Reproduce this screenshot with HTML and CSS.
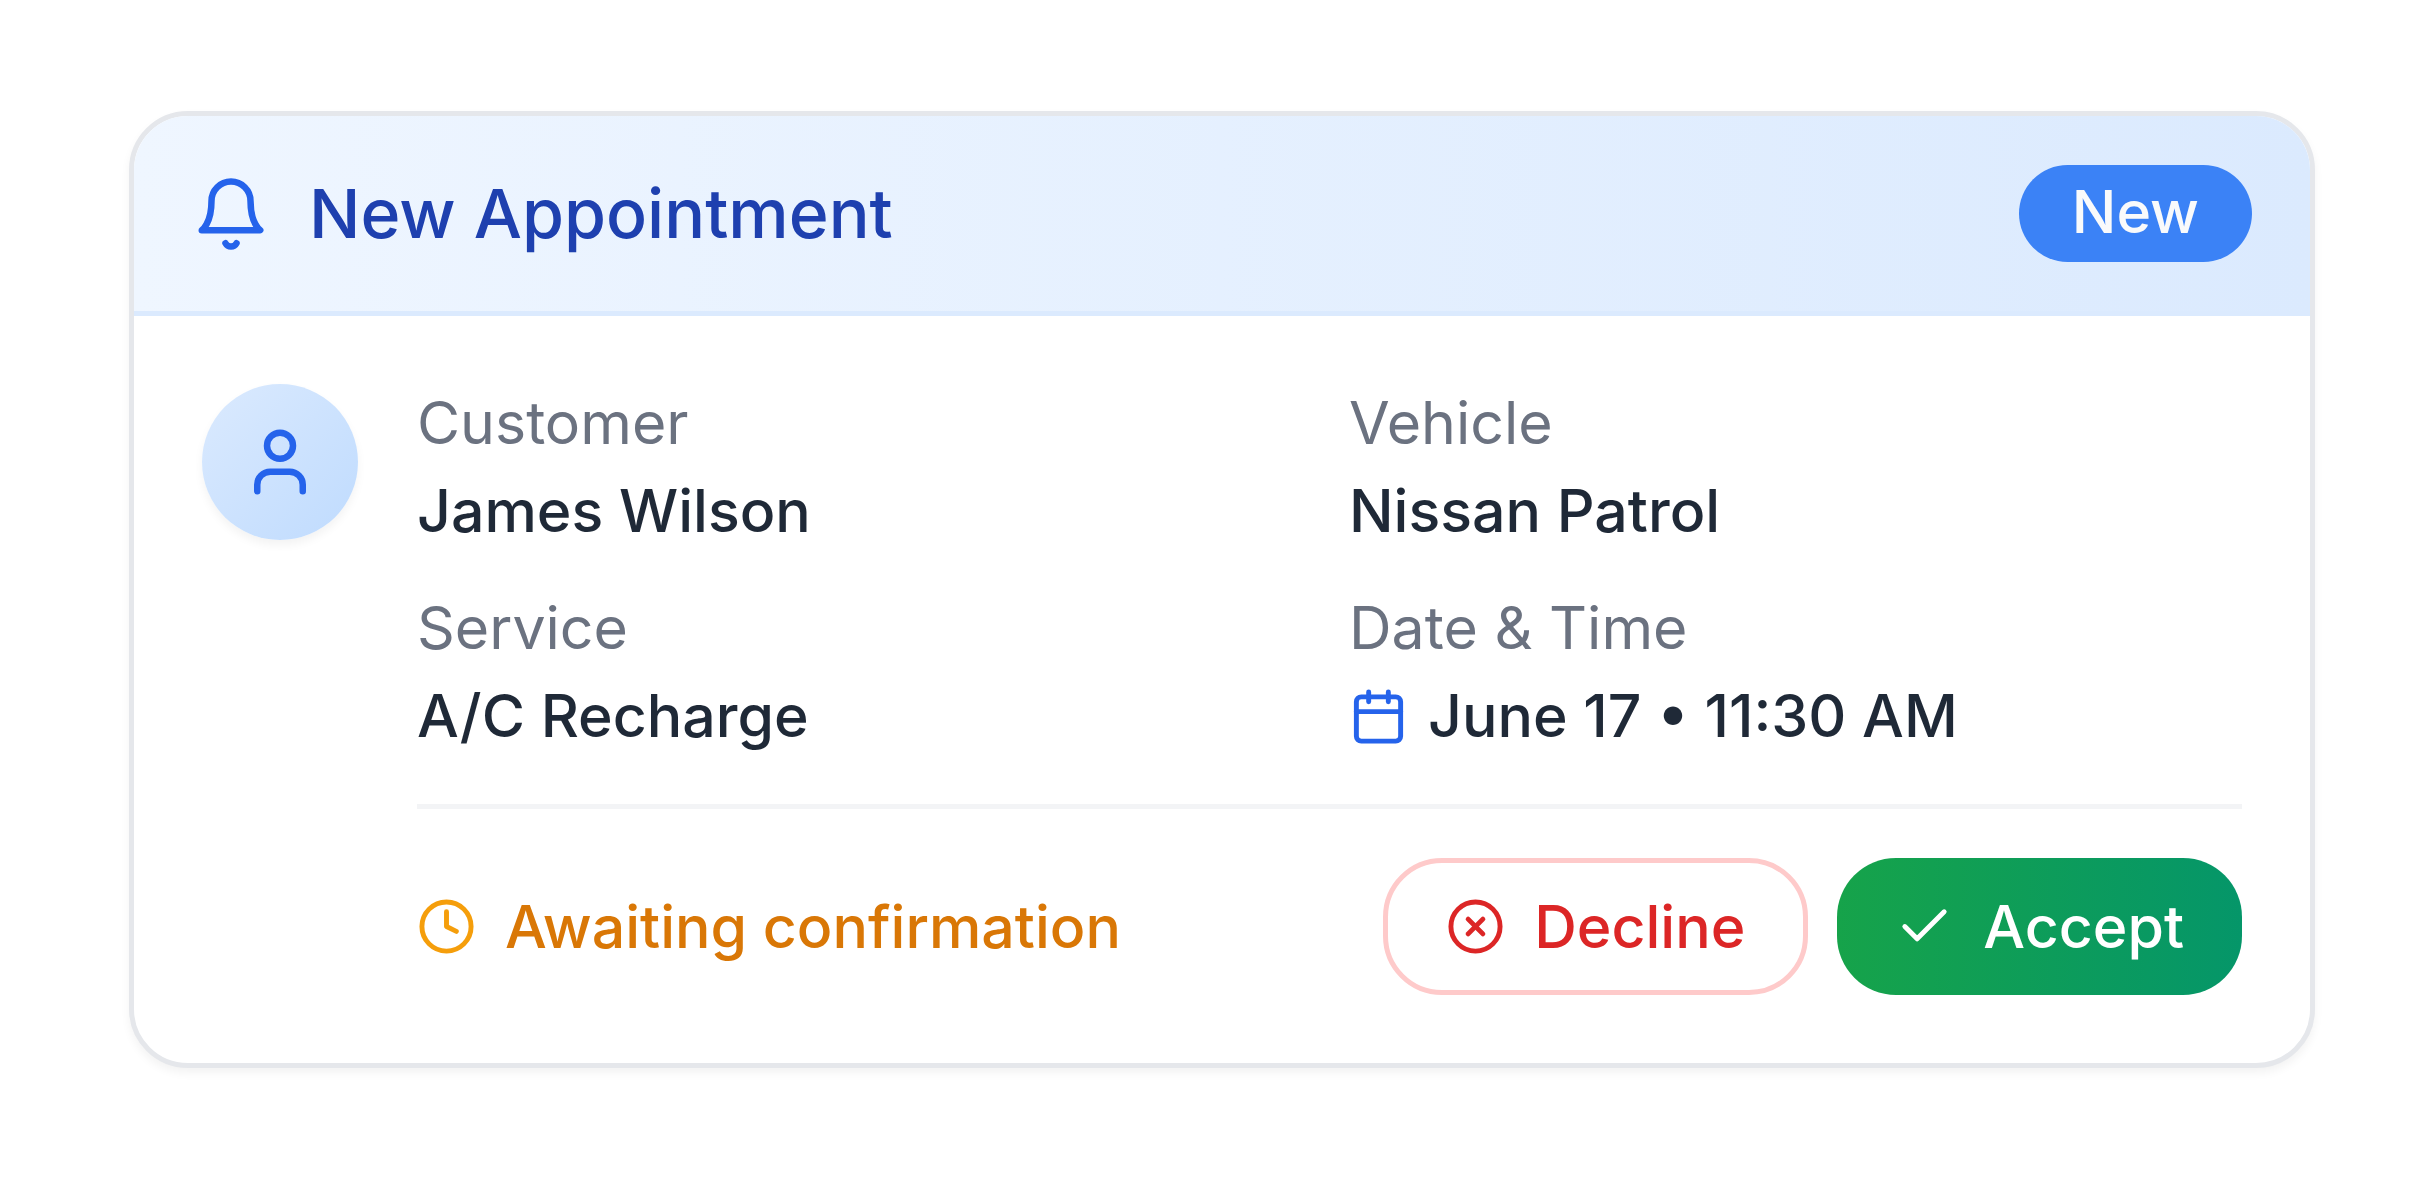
FILE: index.html
```html
<!DOCTYPE html>
<html lang="en">
<head>
<meta charset="utf-8">
<meta name="viewport" content="width=device-width, initial-scale=1">
<title>New Appointment</title>
<link rel="stylesheet" href="styles.css">
</head>
<body>
<article class="card">
  <header class="card-header">
    <svg class="icon icon-lg" viewBox="0 0 24 24" aria-hidden="true"><path d="M6 8a6 6 0 0 1 12 0c0 7 3 9 3 9H3s3-2 3-9"/><path d="M10.3 21a1.94 1.94 0 0 0 3.4 0"/></svg>
    <h1 class="title">New Appointment</h1>
    <span class="badge">New</span>
  </header>
  <div class="card-body">
    <div class="avatar">
      <svg class="icon icon-lg" viewBox="0 0 24 24" aria-hidden="true"><path d="M19 21v-2a4 4 0 0 0-4-4H9a4 4 0 0 0-4 4v2"/><circle cx="12" cy="7" r="4"/></svg>
    </div>
    <div class="content">
      <dl class="details">
        <div class="detail"><dt>Customer</dt><dd>James Wilson</dd></div>
        <div class="detail"><dt>Vehicle</dt><dd>Nissan Patrol</dd></div>
        <div class="detail"><dt>Service</dt><dd>A/C Recharge</dd></div>
        <div class="detail"><dt>Date &amp; Time</dt><dd class="date"><svg class="icon" viewBox="0 0 24 24" aria-hidden="true"><path d="M8 2v4"/><path d="M16 2v4"/><rect width="18" height="18" x="3" y="4" rx="2"/><path d="M3 10h18"/></svg>June 17 • 11:30 AM</dd></div>
      </dl>
      <footer class="card-footer">
        <p class="status"><svg class="icon" viewBox="0 0 24 24" aria-hidden="true"><circle cx="12" cy="12" r="10"/><path d="M12 6v6l4 2"/></svg>Awaiting confirmation</p>
        <div class="actions">
          <button type="button" class="button decline"><svg class="icon" viewBox="0 0 24 24" aria-hidden="true"><circle cx="12" cy="12" r="10"/><path d="m15 9-6 6"/><path d="m9 9 6 6"/></svg>Decline</button>
          <button type="button" class="button accept"><svg class="icon" viewBox="0 0 24 24" aria-hidden="true"><path d="M20 6 9 17l-5-5"/></svg>Accept</button>
        </div>
      </footer>
    </div>
  </div>
</article>
</body>
</html>
```
FILE: styles.css
```css
* {
  box-sizing: border-box;
  margin: 0;
}

body {
  padding: 111px 107px 111px 129px;
  background: #fff;
  color: #1f2937;
  font: 500 59px/78px Inter, "Liberation Sans", sans-serif;
}

.card {
  overflow: hidden;
  border: 5px solid #e5e7eb;
  border-radius: 59px;
  background: #fff;
  box-shadow: 0 5px 10px rgba(0, 0, 0, 0.05);
}

.icon {
  flex: none;
  width: 59px;
  height: 59px;
  fill: none;
  stroke: currentColor;
  stroke-width: 2;
  stroke-linecap: round;
  stroke-linejoin: round;
}

.icon-lg {
  width: 78px;
  height: 78px;
  color: #2563eb;
}

.card-header {
  display: flex;
  align-items: center;
  gap: 39px;
  padding: 49px 58px;
  border-bottom: 5px solid #dbeafe;
  background: linear-gradient(to right, #eff6ff, #dbeafe);
}

.title {
  flex: 1;
  color: #1e40af;
  font-size: 68px;
  font-weight: 500;
  line-height: 97px;
}

.badge {
  padding: 8px 53px 11px;
  border-radius: 49px;
  background: #3b82f6;
  color: #f9fafb;
}

.card-body {
  display: flex;
  gap: 59px;
  padding: 68px;
}

.avatar {
  display: flex;
  flex: none;
  align-items: center;
  justify-content: center;
  width: 156px;
  height: 156px;
  border-radius: 50%;
  background: linear-gradient(to bottom right, #dbeafe, #bfdbfe);
  box-shadow: 0 5px 10px rgba(0, 0, 0, 0.05);
}

.content {
  flex: 1;
}

.details {
  display: grid;
  grid-template-columns: 1fr 1fr;
  gap: 39px;
}

.detail {
  display: grid;
  gap: 10px;
}

.detail dt {
  color: #6b7280;
  font-weight: 400;
}

.date {
  display: flex;
  align-items: center;
  gap: 20px;
}

.date .icon {
  color: #2563eb;
}

.card-footer {
  display: flex;
  flex-wrap: wrap;
  align-items: center;
  justify-content: space-between;
  margin-top: 49px;
  padding-top: 49px;
  border-top: 5px solid #f3f4f6;
}

.status {
  display: flex;
  align-items: center;
  gap: 29px;
  color: #d97706;
}

.status .icon {
  color: #f59e0b;
}

.actions {
  display: flex;
  gap: 29px;
}

.button {
  display: flex;
  align-items: center;
  gap: 29px;
  height: 137px;
  padding: 0 58px;
  border: 0;
  border-radius: 59px;
  font: inherit;
}

.decline {
  border: 5px solid #fecaca;
  background: #fff;
  color: #dc2626;
}

.accept {
  background: linear-gradient(to right, #16a34a, #059669);
  color: #fff;
}
```
